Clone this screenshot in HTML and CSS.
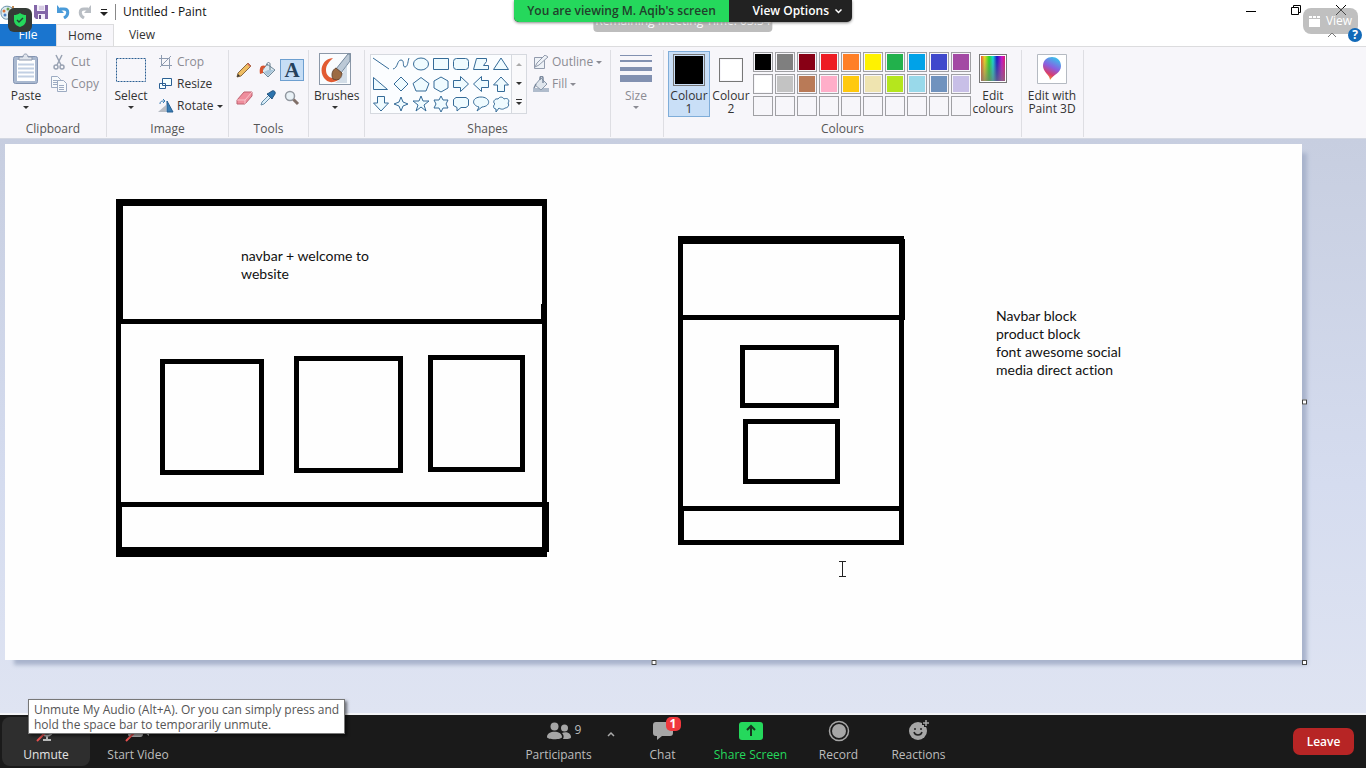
FILE: index.html
```html
<!DOCTYPE html>
<html lang="en">
<head>
<meta charset="utf-8">
<title>Untitled - Paint</title>
<link rel="stylesheet" href="styles.css">
</head>
<body>
<header class="titlebar">
  <div class="quick">
    <svg class="app" width="17" height="17" viewBox="0 0 17 17"><path d="M1 9C0 3 7 0 12 4c4 4 2 8-1 8-2 0-2 1-3 3-4 1-7-2-7-6z" fill="#dcebf2" stroke="#6c94aa"/><circle cx="4" cy="7" r="1.5" fill="#d8743c"/><circle cx="8" cy="5" r="1.5" fill="#6ba34c"/><circle cx="5" cy="11" r="1.5" fill="#4c7fc3"/><path d="M13 2v12" stroke="#c28a57" stroke-width="2"/></svg>
    <button class="qbtn" aria-label="Save"><svg width="14" height="14" viewBox="0 0 14 14"><path d="M0 0h14v14H2l-2-2z" fill="#8366a8"/><path d="M3 0h8v6H3zM4 9h7v5H4z" fill="#f2eef8"/><path d="M5 2h5M5 4h5" stroke="#b8a8cc"/><path d="M5 10h2v4H5z" fill="#66508a"/></svg></button>
    <button class="qbtn" aria-label="Undo"><svg width="14" height="14" viewBox="0 0 14 14"><path d="M4 4h4c5 0 5 6 0 9" fill="none" stroke="#4a9bd9" stroke-width="3"/><path d="M1 0v8h7z" fill="#4a9bd9"/></svg></button>
    <button class="qbtn" aria-label="Redo"><svg width="14" height="14" viewBox="0 0 14 14"><path d="M10 4H6C1 4 1 10 6 13" fill="none" stroke="#b9bec4" stroke-width="3"/><path d="M13 0v8H6z" fill="#b9bec4"/></svg></button>
    <button class="qbtn" aria-label="Customise toolbar"><svg width="8" height="7" viewBox="0 0 8 7"><path d="M1 .5h6" stroke="#222"/><path d="M0 3h8L4 7z" fill="#222"/></svg></button>
  </div>
  <h1>Untitled - Paint</h1>
  <div class="window">
    <button aria-label="Minimise"><svg width="12" height="12" viewBox="0 0 12 12"><path d="M1 8.500h10" stroke="#000"/></svg></button>
    <button aria-label="Restore"><svg width="12" height="12" viewBox="0 0 12 12" fill="none" stroke="#000"><path d="M1.500 4.500h7v7h-7zM3.500 4.500v-2h7v7h-2"/></svg></button>
    <button aria-label="Close"><svg width="12" height="12" viewBox="0 0 12 12"><path d="M1 2l10 10M11 2L1 12" stroke="#000"/></svg></button>
  </div>
  <span class="shield"><svg width="12" height="14" viewBox="0 0 12 14"><path d="M6 0c2 1.500 4 2 6 2v5c0 4-3 6-6 7-3-1-6-3-6-7V2c2 0 4-.5 6-2z" fill="#25d85c"/><path d="M3 7l2 2 4-4" fill="none" stroke="#243" stroke-width="1.400"/></svg></span>
</header>
<nav class="tabs">
  <button class="tab file">File</button>
  <button class="tab active">Home</button>
  <button class="tab">View</button>
  <span class="tabtools">
    <svg width="10" height="6" viewBox="0 0 10 6"><path d="M1 5l4-4 4 4" fill="none" stroke="#777"/></svg>
    <button class="help" aria-label="Help">?</button>
  </span>
</nav>
<main class="ribbon">
  <section class="group clipboard">
    <div class="tools">
      <button class="big"><svg class="pic" width="28" height="32" viewBox="0 0 28 32"><rect x="1.500" y="3.500" width="24" height="27" rx="2" fill="#a9b8cf" stroke="#8495b3"/><path d="M5 7h18v21H5z" fill="#fff"/><path d="M6 11.500h16M6 15.500h16M6 19.500h16M6 23.500h16" stroke="#c2d0e3" stroke-width="2"/><path d="M7 7V4h4c0-4 5-4 5 0h4v3z" fill="#dfe4ec" stroke="#8d99ad"/></svg>Paste<i class="caret"></i></button>
      <div class="stack">
        <button class="small off"><svg width="16" height="16" viewBox="0 0 16 16" fill="none" stroke="#9aa3b3" stroke-width="1.500"><path d="M5 1l5 10M11 1L6 11"/><circle cx="5" cy="13" r="2"/><circle cx="11" cy="13" r="2"/></svg>Cut</button>
        <button class="small off"><svg width="16" height="16" viewBox="0 0 16 16" fill="#f8fafc" stroke="#9dabc2"><path d="M.5.500h6l3 3v8h-9z"/><path d="M2 4.500h5M2 6.500h5M2 8.500h5"/><path d="M6.500 4.500h6l3 3v8h-9zM8 9.500h5M8 11.500h5M8 13.500h5"/></svg>Copy</button>
      </div>
    </div>
    <h2>Clipboard</h2>
  </section>
  <section class="group image">
    <div class="tools">
      <button class="big"><svg class="pic" width="32" height="32" viewBox="0 0 32 32"><rect x="1.500" y="5.500" width="29" height="23" fill="none" stroke="#2b5f93" stroke-dasharray="2 1"/></svg>Select<i class="caret"></i></button>
      <div class="stack">
        <button class="small off"><svg width="16" height="14" viewBox="0 0 16 14" fill="none" stroke="#8e9bb0"><path d="M3.500 0v10.500H14M1 3.500h10.500V14M2 12L13 1"/></svg>Crop</button>
        <button class="small"><svg width="16" height="14" viewBox="0 0 16 14" fill="#f4ffff" stroke="#2b5f93"><path d="M4.500 1.500h9v7h-9zM1.500 6.500h6v5h-6z"/></svg>Resize</button>
        <button class="small"><svg width="16" height="14" viewBox="0 0 16 14"><path d="M0 13h8V6z" fill="#b7bcc4"/><path d="M9 2v11h6z" fill="#397db4" stroke="#275f91"/><path d="M2 5c0-3 2-3 5-3M5 0l2 2-2 2" fill="none" stroke="#397db4"/></svg>Rotate<i class="caret"></i></button>
      </div>
    </div>
    <h2>Image</h2>
  </section>
  <section class="group toolset">
    <div class="tools toolgrid">
      <button aria-label="Pencil"><svg width="16" height="16" viewBox="0 0 16 16"><path d="M1 15l1-4L12 1l3 3L5 14z" fill="#efbd62" stroke="#8a6a42"/><path d="M11 2l3 3 1-1-3-3z" fill="#d86a5a"/><path d="M1 15l1-3 2 2z" fill="#333"/></svg></button>
      <button aria-label="Fill with colour"><svg width="18" height="16" viewBox="0 0 18 16"><path d="M8 2l8 6-7 7-6-6z" fill="#dce8ef" stroke="#70899a"/><path d="M11 8V2c0-2-3-2-3 0v2" fill="none" stroke="#657a88"/><path d="M7 4C2 2 0 5 1 12l3-1 0-4z" fill="#d9542e"/><path d="M9 14l6-6H9l-4 2z" fill="#a9c6da"/></svg></button>
      <button aria-label="Text" class="chosen">A</button>
      <button aria-label="Eraser"><svg width="17" height="14" viewBox="0 0 17 14"><path d="M1 9L8 1h8v4l-7 8H1z" fill="#ef8d9c" stroke="#bd6270"/><path d="M1 9h8l7-8M9 9v4" fill="none" stroke="#f8c2ca"/></svg></button>
      <button aria-label="Colour picker"><svg width="16" height="16" viewBox="0 0 16 16"><path d="M1 15l1-3 7-7 2 2-7 7z" fill="#d8edf9" stroke="#668da8"/><path d="M7 4l5 5 1-2 2-3c1-2-1-4-3-3L9 3z" fill="#2d73ad" stroke="#24547f"/></svg></button>
      <button aria-label="Magnifier"><svg width="16" height="16" viewBox="0 0 16 16"><circle cx="6" cy="6" r="4.500" fill="#e9f1f6" stroke="#9298a0" stroke-width="1.500"/><path d="M9.500 9.500L14 14" stroke="#806f68" stroke-width="3"/></svg></button>
    </div>
    <h2>Tools</h2>
  </section>
  <section class="group brushes">
    <div class="tools">
      <button class="big"><svg class="pic" width="32" height="32" viewBox="0 0 32 32"><rect x=".5" y=".5" width="31" height="31" fill="#fafcfe" stroke="#8c98a8"/><path d="M14 5C2 6-1 20 7 27c4 4 12 2 15-3-7 3-15 1-15-7 0-5 3-8 7-12z" fill="#e25b32"/><path d="M31 1v7L22 20l-5-4L29 1z" fill="#bcc9d6" stroke="#73879b"/><path d="M17 15l6 5c0 6-4 8-9 6-2-4-1-9 3-11z" fill="#9c6b43" stroke="#694a35"/><path d="M28 8v22H16c6-3 9-12 12-22z" fill="#a3b7cc" opacity=".45"/></svg>Brushes<i class="caret"></i></button>
    </div>
  </section>
  <section class="group shapes">
    <div class="tools">
      <div class="gallery">
        <svg width="140" height="58" viewBox="0 0 140 58" fill="#effbff" stroke="#356b98">
          <path d="M2 3l16 11" fill="none"/><path d="M22 14c5-1 4-9 8-9s1 7 4 7 3-7 4-9" fill="none"/><ellipse cx="50" cy="9" rx="7.500" ry="6"/><path d="M62.500 3.500h15v11h-15z"/><rect x="82.500" y="3.500" width="15" height="11" rx="3"/><path d="M102.500 14.500l3-11h10v3l-3 4h5v4z"/><path d="M130 3l7.500 11.500h-15z"/>
          <path d="M2.500 22.500v12h14z"/><path d="M30 22l7 7-7 7-7-7z"/><path d="M50 22.500l8 6-3 7.500H45l-3-7.500z"/><path d="M70 22l7 4v7l-7 4-7-4v-7z"/><path d="M82.500 25.500h7v-4l8 7.500-8 7.500v-4h-7z"/><path d="M117.500 25.500h-7v-4l-8 7.500 8 7.500v-4h7z"/><path d="M130 22l7.500 8h-4v6.500h-7V30h-4z"/>
          <path d="M10 56l7.500-8h-4v-6.500h-7V48h-4z"/><path d="M30 42l2 5 5 2-5 2-2 5-2-5-5-2 5-2z"/><path d="M50 41l2 5h6l-5 4 2 6-5-4-5 4 2-6-5-4h6z"/><path d="M70 41l2 4h5l-2 4 2 4h-5l-2 4-2-4h-5l2-4-2-4h5z"/><path d="M85 42.500h10l2.500 2v6l-2.500 2h-5L86 56v-3.500l-3.500-2v-6z"/><path d="M108 52c-8-2-7-10 2-10s11 9 1 10l-5 4z"/><path d="M125 54c-3 0-3-4-1-5-3-2 0-6 3-5 2-3 5-2 6 0 4-2 6 2 4 4 2 3-1 5-3 5-2 2-5 1-6 0l-3 4z"/>
        </svg>
        <div class="scroll"><button aria-label="Previous row"><i class="caret up"></i></button><button aria-label="Next row"><i class="caret"></i></button><button aria-label="All shapes"><i class="caret all"></i></button></div>
      </div>
      <div class="stack">
        <button class="small off"><svg width="16" height="14" viewBox="0 0 16 14" fill="#eef2f7" stroke="#929bad"><path d="M1.500 2.500h10v11h-10z"/><path d="M2 12l2-4 8-8 3 2-9 8z"/></svg>Outline<i class="caret"></i></button>
        <button class="small off"><svg width="16" height="16" viewBox="0 0 16 16"><path d="M0 12h16v4H0z" fill="#b0bccc"/><path d="M8 2l6 6-6 6-6-5z" fill="#e0e6ed" stroke="#8b98aa"/><path d="M10 7V2c0-2-3-2-3 0v2M3 8l-2 4" fill="none" stroke="#7c8a9e" stroke-width="1.500"/></svg>Fill<i class="caret"></i></button>
      </div>
    </div>
    <h2>Shapes</h2>
  </section>
  <section class="group size">
    <div class="tools">
      <button class="big off"><svg class="pic" width="32" height="32" viewBox="0 0 32 32" fill="#8291b1"><path d="M0 2h32v1H0zM0 7h32v2H0zM0 14h32v4H0zM0 22h32v7H0z"/></svg>Size<i class="caret"></i></button>
    </div>
  </section>
  <section class="group colours">
    <div class="tools">
      <button class="big well chosen"><span class="pic ink first"></span>Colour<br>1</button>
      <button class="big well"><span class="pic ink second"></span>Colour<br>2</button>
      <div class="palette">
        <button class="black" aria-label="Black"></button><button class="grey" aria-label="Grey"></button><button class="maroon" aria-label="Dark red"></button><button class="red" aria-label="Red"></button><button class="orange" aria-label="Orange"></button><button class="yellow" aria-label="Yellow"></button><button class="green" aria-label="Green"></button><button class="sky" aria-label="Turquoise"></button><button class="indigo" aria-label="Indigo"></button><button class="purple" aria-label="Purple"></button>
        <button class="white" aria-label="White"></button><button class="silver" aria-label="Light grey"></button><button class="brown" aria-label="Brown"></button><button class="rose" aria-label="Rose"></button><button class="gold" aria-label="Gold"></button><button class="cream" aria-label="Light yellow"></button><button class="lime" aria-label="Lime"></button><button class="aqua" aria-label="Light turquoise"></button><button class="steel" aria-label="Blue-grey"></button><button class="lavender" aria-label="Lavender"></button>
        <button aria-label="Custom 1"></button><button aria-label="Custom 2"></button><button aria-label="Custom 3"></button><button aria-label="Custom 4"></button><button aria-label="Custom 5"></button><button aria-label="Custom 6"></button><button aria-label="Custom 7"></button><button aria-label="Custom 8"></button><button aria-label="Custom 9"></button><button aria-label="Custom 10"></button>
      </div>
      <button class="big"><span class="pic rainbow"></span>Edit<br>colours</button>
    </div>
    <h2>Colours</h2>
  </section>
  <section class="group paint3d">
    <div class="tools">
      <button class="big wide"><svg class="pic" width="30" height="32" viewBox="0 -1 30 32"><defs><linearGradient id="drop" x1=".7" y1="0" x2=".3" y2="1"><stop offset="0" stop-color="#35c5ed"/><stop offset=".45" stop-color="#8a5fe0"/><stop offset=".75" stop-color="#d73d70"/><stop offset="1" stop-color="#f6a51b"/></linearGradient></defs><path d="M.5.500h29v29H.5z" fill="#fff" stroke="#b5bac2"/><path d="M13 26c0-5-7-8-7-14C6 0 24 0 24 12c0 7-7 8-11 14z" fill="url(#drop)"/></svg>Edit with<br>Paint 3D</button>
    </div>
  </section>
</main>
<div class="workspace">
  <div class="sheet">
    <svg class="drawing" width="1000" height="516" viewBox="5 144 1000 516">
      <path d="M116 199h431v7H116zM116 199h7v122h-7zM116 319h5v236h-5zM542 200h5v304h-5zM541 304h6v16h-6zM118 319h428v5H118zM117 502h432v5H117zM542 502h7v50h-7zM116 505h6v50h-6zM116 547h431v10H116z"/>
      <path d="M678 236h226v8H678zM678 236h5v309h-5zM899 239h6v81h-6zM680 315h223v5H680zM899 315h5v230h-5zM680 506h222v5H680zM678 508h6v37h-6zM678 540h226v5H678z"/>
      <g fill="none" stroke="#000" stroke-width="5"><path d="M162.500 361.500h99v111h-99zM296.500 358.500h104v112h-104zM430.500 357.500h92v112h-92zM742.500 347.500h94v58h-94zM745.500 421.500h92v60h-92z"/></g>
      <path d="M839 561.500h7M839 576.500h7M842.500 562v14" stroke="#222"/>
    </svg>
    <p class="note welcome">navbar + welcome to<br>website</p>
    <p class="note blocks">Navbar block<br>product block<br>font awesome social<br>media direct action</p>
    <i class="handle east"></i><i class="handle south"></i><i class="handle corner"></i>
  </div>
</div>
<div class="remaining">Remaining Meeting Time: 03:34</div>
<div class="banner"><span>You are viewing M. Aqib's screen</span><button>View Options<svg width="7" height="5" viewBox="0 0 7 5"><path d="M.5.500l3 3 3-3" fill="none" stroke="#fff" stroke-width="1.500"/></svg></button></div>
<button class="viewmode"><svg width="11" height="11" viewBox="0 0 11 11"><path d="M0 0h3v2H0zM4 0h3v2H4zM8 0h3v2H8zM0 3h11v8H0z" fill="#fff"/></svg>View</button>
<footer class="meeting">
  <div class="side">
    <button class="act hover"><svg width="20" height="24" viewBox="0 0 20 24" fill="none" stroke="#bbb" stroke-width="2"><rect x="8" y="2" width="6" height="12" rx="3" fill="#bbb"/><path d="M5 10c0 9 12 9 12 0M11 17v4M7 21h8"/><path d="M1 22L18 5" stroke="#e8504f"/></svg>Unmute</button>
    <button class="act video"><svg width="26" height="24" viewBox="0 0 26 24"><rect x="3" y="5" width="15" height="13" rx="3" fill="#bbb"/><path d="M19 10l5-4v11l-5-4z" fill="#bbb"/><path d="M1 22L18 5" stroke="#e8504f" stroke-width="2"/></svg>Start Video</button>
  </div>
  <div class="centre">
    <button class="act"><svg width="24" height="24" viewBox="0 0 24 24" fill="#a6a6a6"><circle cx="7.500" cy="7.500" r="4"/><circle cx="17.500" cy="9" r="3.500"/><path d="M0 18c0-7 15-7 15 0 0 3-15 3-15 0zM16 20c1-2 1-4-1-6 4-2 9 0 9 4 0 2-3 2-8 2z"/></svg>Participants<span class="count">9</span></button>
    <button class="expand" aria-label="Participant options"><svg width="8" height="6" viewBox="0 0 8 6"><path d="M1 5l3-3 3 3" fill="none" stroke="#aaa" stroke-width="1.500"/></svg></button>
    <button class="act"><svg width="22" height="24" viewBox="0 0 22 24"><path d="M4 3h14a3 3 0 0 1 3 3v8a3 3 0 0 1-3 3h-8l-5 4v-4H4a3 3 0 0 1-3-3V6a3 3 0 0 1 3-3z" fill="#a6a6a6"/></svg>Chat<span class="badge">1</span></button>
    <button class="act share"><svg width="24" height="24" viewBox="0 0 24 24"><rect y="3" width="24" height="18" rx="3" fill="#25d85c"/><path d="M12 17V8M8 11l4-4 4 4" fill="none" stroke="#17331f" stroke-width="2"/></svg>Share Screen</button>
    <button class="act"><svg width="22" height="24" viewBox="0 0 22 24"><circle cx="11" cy="12" r="9.500" fill="none" stroke="#a6a6a6" stroke-width="1.500"/><circle cx="11" cy="12" r="7" fill="#a6a6a6"/></svg>Record</button>
    <button class="act react"><svg width="22" height="24" viewBox="0 0 22 24"><circle cx="10" cy="12" r="9" fill="#a6a6a6"/><path d="M18 0v8M14 4h8" stroke="#1a1a1a" stroke-width="4"/><path d="M18 1v6M15 4h6" stroke="#a6a6a6" stroke-width="1.500"/><circle cx="7" cy="10" r="1" fill="#222"/><circle cx="13" cy="10" r="1" fill="#222"/><path d="M6 13c1 4 7 4 8 0" fill="none" stroke="#222" stroke-width="1.500"/></svg>Reactions</button>
  </div>
  <button class="leave">Leave</button>
  <div class="tooltip" role="tooltip">Unmute My Audio (Alt+A). Or you can simply press and<br>hold the space bar to temporarily unmute.</div>
</footer>
</body>
</html>
```
FILE: styles.css
```css
* { box-sizing: border-box; }
body { margin: 0; height: 100vh; display: flex; flex-direction: column; position: relative; overflow: hidden; font: 12px/16px "Open Sans", "Noto Sans", sans-serif; color: #333; background: #fff; }
button { font: inherit; color: inherit; background: none; border: 0; padding: 0; margin: 0; }
h1, h2, p { margin: 0; font: inherit; }
svg { display: block; flex: none; }

.titlebar { display: flex; align-items: center; height: 24px; position: relative; }
.quick { display: flex; align-items: center; gap: 8px; height: 16px; padding-right: 7px; border-right: 1px solid #888; }
.app { margin-right: 9px; }
.titlebar h1 { padding-left: 7px; color: #111; font-size: 12px; }
.window { display: flex; align-items: flex-start; margin-left: auto; height: 20px; padding: 1px 19px 0 0; gap: 33px; }
.shield { position: absolute; left: 8px; top: 8px; width: 24px; height: 24px; border-radius: 6px; background: #343a36; display: grid; place-items: center; z-index: 3; }

.tabs { display: flex; height: 22px; flex: none; align-items: stretch; }
.tab { width: 56px; }
.tab.file { background: #1a75cf; color: #fff; }
.tab.active { width: 58px; background: #f7f6fa; border: 1px solid #dcdcde; border-bottom: 0; }
.tabtools { margin-left: auto; display: flex; align-items: center; gap: 11px; padding-right: 4px; z-index: 3; }
.help { width: 14px; height: 14px; border-radius: 50%; background: #1169b8; color: #fff; font-weight: 700; line-height: 14px; }

.ribbon { display: flex; flex: none; background: #f7f6fa; border-top: 1px solid #dcdcde; border-bottom: 1px solid #d4d8e2; height: 93px; padding-top: 3px; }
.group { display: flex; flex-direction: column; height: 87px; border-right: 1px solid #dedee3; padding: 0 5px; }
.group h2 { text-align: center; color: #555; line-height: 16px; }
.tools { display: flex; align-items: flex-start; height: 71px; }
.clipboard { width: 107px; }
.image { width: 122px; padding: 0 3px; }
.toolset { width: 80px; padding: 0 3px; }
.brushes { width: 56px; }
.shapes { width: 246px; }
.size { width: 53px; padding: 0 4px; }
.colours { width: 358px; padding: 0 4px; }
.paint3d { width: 62px; padding: 0 4px; }
.big { display: block; flex: none; width: 42px; line-height: 13px; text-align: center; white-space: nowrap; padding-top: 3px; }
.wide { width: 52px; }
.pic { display: block; margin: 0 auto 4px; }
.caret { display: inline-block; width: 0; height: 0; border: 3px solid transparent; border-top-color: currentColor; border-bottom: 0; }
.big .caret { display: block; margin: 4px auto 0; }
.caret.up { border-top: 0; border-bottom: 3px solid #aaa; }
.caret.all { position: relative; }
.caret.all::before { content: ""; position: absolute; left: -3px; top: -6px; width: 6px; height: 1px; background: #333; }
.stack { display: flex; flex-direction: column; padding: 1px 0 0 4px; }
.small { display: flex; align-items: center; gap: 4px; height: 22px; white-space: nowrap; }
.image .stack { padding-left: 6px; }
.shapes .stack { padding-left: 6px; }
.image .small, .shapes .small { gap: 3px; }
.off { color: #8b8b93; }
.toolgrid { display: grid; grid-template-columns: repeat(3, 24px); grid-template-rows: repeat(2, 24px); row-gap: 4px; padding-top: 8px; align-items: center; }
.toolgrid button { display: grid; place-items: center; }
.toolgrid .chosen { background: #c6ddf5; border: 1px solid #6d9fd0; font: bold 21px/20px "Liberation Serif", serif; color: #26415c; }
.gallery { display: flex; flex: none; width: 157px; height: 60px; margin-top: 4px; border: 1px solid #d6d9df; background: #fbfdff; }
.scroll { display: flex; flex-direction: column; flex: 1; border-left: 1px solid #d6d9df; background: #f9f9fb; }
.scroll button { flex: 1; display: grid; place-items: center; }
.colours .tools { padding-top: 1px; }
.well { border: 1px solid transparent; padding: 2px 0 1px; }
.well.chosen { background: #c9dff7; border-color: #7fadd9; }
.ink { border: 1px solid #777; background-clip: content-box; padding: 1px; }
.first { width: 32px; height: 32px; background-color: #000; margin-bottom: 3px; }
.second { width: 24px; height: 24px; background-color: #fff; margin: 4px auto 7px; }
.palette { display: grid; grid-template-columns: repeat(10, 20px); grid-auto-rows: 20px; gap: 2px; padding: 1px 0 0 1px; }
.palette button { border: 1px solid #a0a0a4; padding: 1px; background-clip: content-box; }
.black { background-color: #000; } .grey { background-color: #7f7f7f; } .maroon { background-color: #880015; }
.red { background-color: #ed1c24; } .orange { background-color: #ff7f27; } .yellow { background-color: #fff200; }
.green { background-color: #22b14c; } .sky { background-color: #00a2e8; } .indigo { background-color: #3f48cc; }
.purple { background-color: #a349a4; } .white { background-color: #fff; } .silver { background-color: #c3c3c3; }
.brown { background-color: #b97a57; } .rose { background-color: #ffaec9; } .gold { background-color: #ffc90e; }
.cream { background-color: #efe4b0; } .lime { background-color: #b5e61d; } .aqua { background-color: #99d9ea; }
.steel { background-color: #7092be; } .lavender { background-color: #c8bfe7; }
.palette + .big { margin-left: 1px; }
.rainbow { width: 28px; height: 29px; margin-bottom: 6px; border: 1px solid #777; box-shadow: inset 0 0 0 1px #fff; background: linear-gradient(transparent, #777b), linear-gradient(90deg, #e33, #ed2 18%, #2d2 35%, #1dd 50%, #11c 65%, #c1c 84%, #e15); }

.workspace { flex: 1; display: flex; padding: 5px 64px 53px 5px; background: linear-gradient(#c7cee0, #d5dcef 60%, #dfe4f2); border-bottom: 2px solid #f4f5f8; }
.sheet { flex: 1; position: relative; background: #fefefe; box-shadow: 7px 7px 4px -2px #a9b4cc; }
.drawing { position: absolute; left: 0; top: 0; }
.note { position: absolute; font: 14px/18px Lato, sans-serif; font-variant-ligatures: none; color: #111; white-space: nowrap; }
.welcome { left: 236px; top: 103px; }
.blocks { left: 991px; top: 163px; }
.handle { position: absolute; width: 5px; height: 5px; border: 1px solid #444; background: #fff; }
.east { left: 100%; top: 50%; transform: translateY(-50%); }
.south { left: 50%; top: 100%; transform: translateX(-50%); }
.corner { left: 100%; top: 100%; }

.remaining { position: absolute; left: 50%; top: 12px; transform: translateX(-50%); padding: 0 2px; height: 20px; border-radius: 4px; background: #bdbdbd; color: #fff; line-height: 18px; white-space: nowrap; }
.banner { position: absolute; left: 50%; top: 0; transform: translateX(-50%); display: flex; width: 338px; height: 22px; border-radius: 0 0 5px 5px; overflow: hidden; background: #222; font-weight: 600; line-height: 22px; white-space: nowrap; box-shadow: 0 1px 3px #888; }
.banner span { width: 215px; background: #25d85c; color: #21402b; text-align: center; }
.banner button { flex: 1; display: flex; align-items: center; justify-content: flex-end; gap: 6px; color: #fff; padding-right: 10px; }
.viewmode { position: absolute; right: 8px; top: 8px; width: 55px; height: 26px; border-radius: 8px; background: #8888; color: #fff; display: flex; align-items: center; justify-content: center; gap: 6px; }

.meeting { position: relative; display: flex; justify-content: space-between; align-items: center; height: 53px; flex: none; background: #1a1a1a; color: #bdbdbd; padding: 0 12px 0 2px; }
.side, .centre { display: flex; align-items: center; }
.act { position: relative; height: 49px; width: 88px; display: flex; flex-direction: column; align-items: center; justify-content: flex-end; gap: 4px; padding-bottom: 3px; white-space: nowrap; }
.hover { background: #2e2e2e; border-radius: 8px; color: #e4e4e4; }
.video { width: 96px; }
.share { color: #25d85c; }
.react { width: 72px; margin-right: 10px; }
.expand { width: 16px; height: 32px; display: grid; place-items: start center; padding-top: 5px; }
.count { position: absolute; left: 60px; top: 5px; }
.badge { position: absolute; left: 47px; top: 0; width: 15px; height: 14px; border-radius: 5px; background: #f0383d; color: #fff; font-weight: 700; line-height: 14px; text-align: center; }
.leave { width: 61px; height: 27px; border-radius: 7px; background: #b72525; color: #fff; font-weight: 600; }
.tooltip { position: absolute; left: 28px; bottom: 34px; height: 35px; padding: 2px 5px; background: #fff; border: 1px solid #777; box-shadow: 2px 2px 3px #0008; color: #555; line-height: 15px; white-space: nowrap; }
```
